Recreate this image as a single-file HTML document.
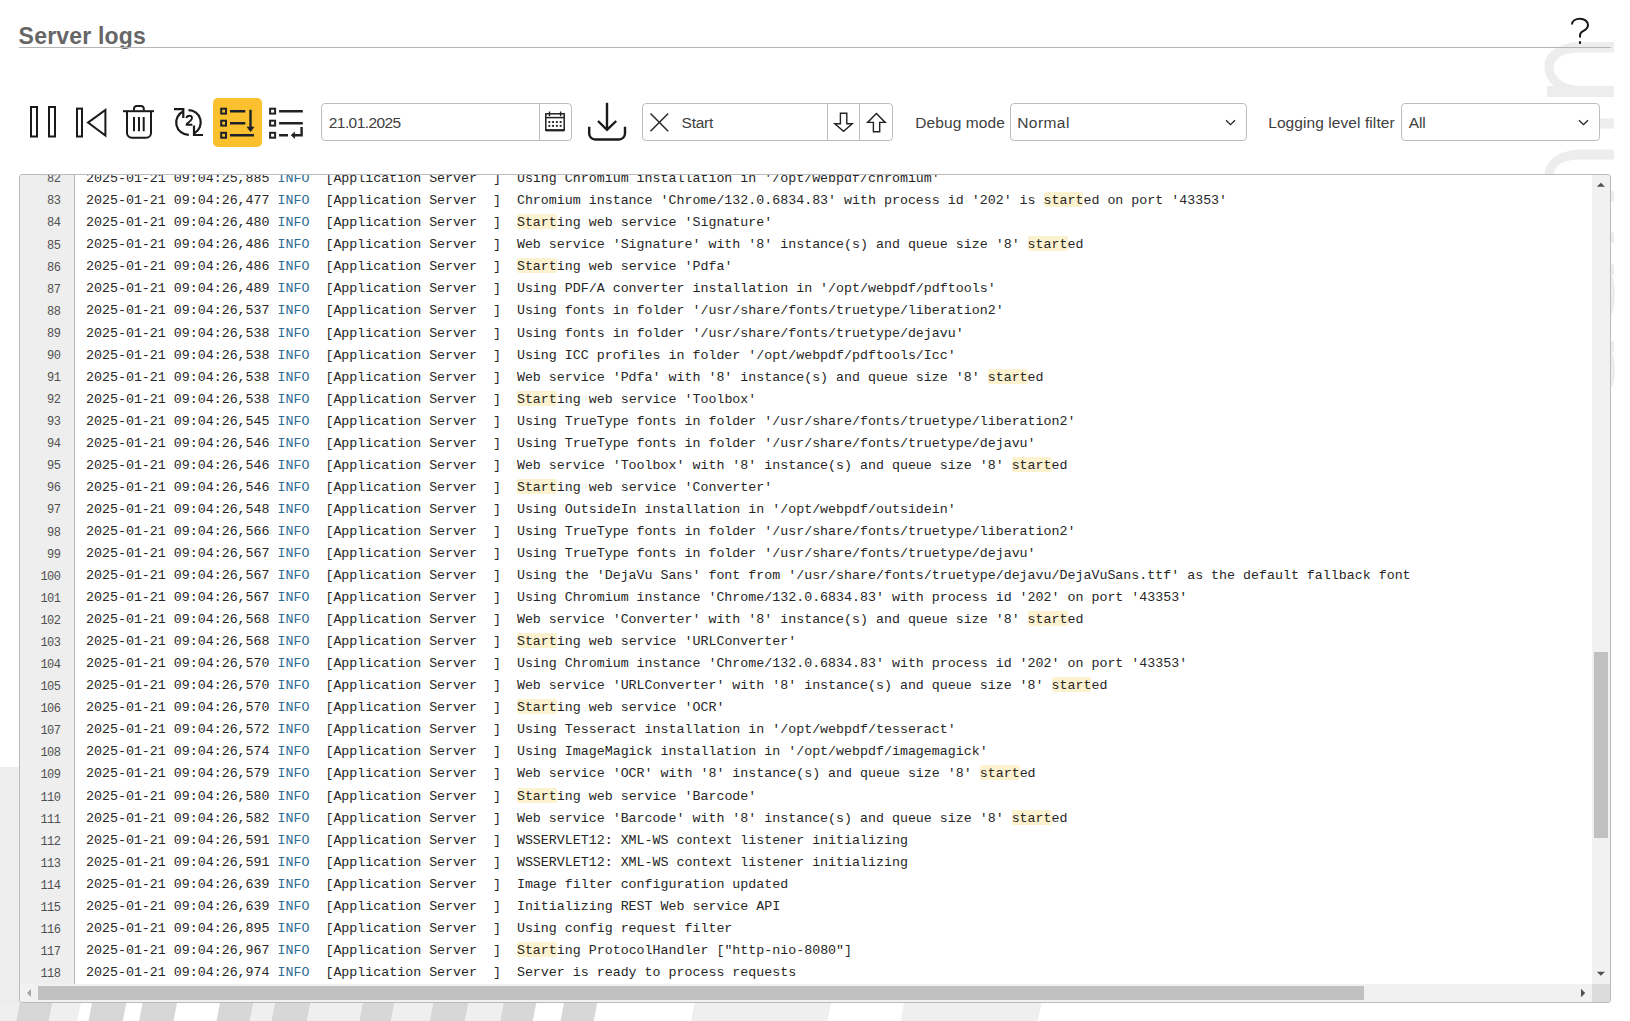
<!DOCTYPE html>
<html><head><meta charset="utf-8"><title>Server logs</title>
<style>
html,body{margin:0;padding:0;}
body{width:1630px;height:1021px;position:relative;overflow:hidden;background:#fff;font-family:"Liberation Sans",sans-serif;color:#333;}
.abs{position:absolute;}
#wm{position:absolute;left:0;top:0;width:1630px;height:1021px;}
#title{position:absolute;left:18.6px;top:21px;font-weight:bold;font-size:23px;line-height:30px;color:#666;white-space:nowrap;letter-spacing:0.2px;}
#uline{position:absolute;left:19px;top:47px;width:1592px;height:1px;background:#b5b5b5;}
#icons{position:absolute;left:0;top:0;width:1630px;height:200px;}
.box{position:absolute;box-sizing:border-box;border:1px solid #bdbdbd;border-radius:4px;background:#fff;height:38px;top:103px;}
.txt{position:absolute;font-size:15.5px;line-height:20px;white-space:nowrap;color:#404040;}
.lbl{position:absolute;font-size:15.5px;line-height:20px;white-space:nowrap;color:#404040;}
.sep{position:absolute;top:0;width:1px;height:36px;background:#bdbdbd;}
#panel{position:absolute;left:19px;top:174px;width:1592px;height:829px;box-sizing:border-box;border:1px solid #bbb;border-radius:3px;background:#fff;overflow:hidden;}
#gutter{position:absolute;left:0;top:0;width:54px;height:809px;background:#eeeeee;border-right:1px solid #bbb;}
#gnums{position:absolute;left:0;top:-6.7px;width:40.3px;}
.gn{font-family:"Liberation Mono",monospace;font-size:12px;letter-spacing:-0.6px;line-height:22.09px;height:22.09px;text-align:right;color:#505050;white-space:pre;}
#lines{position:absolute;z-index:0;left:66px;top:-6.8px;}
.ln{font-family:"Liberation Mono",monospace;font-size:13.3px;line-height:22.06px;height:22.06px;color:#262626;white-space:pre;}
.i{color:#2d6b93;}
b.h{font-weight:normal;position:relative;}
b.h::before{content:"";position:absolute;left:0;right:0;top:-1px;bottom:1px;background:#fdf2cf;border-radius:2px;z-index:-1;}
#vsb{position:absolute;left:1572px;top:0;width:18px;height:809px;background:#f1f1f1;}
#vthumb{position:absolute;left:2px;width:14px;top:477px;height:186px;background:#c1c1c1;}
#hsb{position:absolute;left:0;top:809px;width:1572px;height:18px;background:#f1f1f1;}
#hthumb{position:absolute;left:18px;top:2px;height:14px;width:1326px;background:#c1c1c1;}
#corner{position:absolute;left:1572px;top:809px;width:18px;height:18px;background:#dcdcdc;}
</style></head>
<body>
<svg id="wm" width="1630" height="1021" viewBox="0 0 1630 1021">
  <g fill="#ededed">
    <rect x="0" y="767" width="22" height="254"/>
    <path d="M1614,42 H1582 C1560,42 1544.5,52 1544.5,66 C1544.5,75 1548,81 1554,86 H1547 V97 H1614 V86 H1582 C1565,86 1553.7,78 1553.7,68 C1553.7,58 1563,52.5 1582,52.5 H1614 Z"/>
    <rect x="1590" y="118.4" width="24" height="10.2"/>
    <path d="M1614,149.4 H1582 C1560,149.4 1545,160 1545,174 V180 H1554.5 V174 C1554.5,165 1563,159.6 1582,159.6 H1614 Z"/>
    <rect x="1605" y="191" width="9" height="10.6"/>
    <rect x="1605" y="232.5" width="9" height="10.7"/>
    <rect x="1605" y="264.5" width="9" height="10.5"/>
    <path d="M1605,275 H1612 C1615.5,283 1616.5,300 1612,314.8 H1605 Z"/>
    <rect x="1605" y="341" width="9" height="11"/>
    <path d="M1605,352 H1612 C1615.5,360 1616.5,375 1612,387.6 H1605 Z"/>
  </g>
  <polygon points="0,1003 19.8,1003 16.3,1021 0,1021" fill="#efefef"/>
  <polygon points="19.8,1003 52.4,1003 48.9,1021 16.3,1021" fill="#d7d7d7"/>
  <polygon points="52.4,1003 80.8,1003 77.3,1021 48.9,1021" fill="#efefef"/>
  <polygon points="92,1003 126.3,1003 122.8,1021 88.5,1021" fill="#d7d7d7"/>
  <polygon points="142.6,1003 177,1003 173.5,1021 139.1,1021" fill="#d7d7d7"/>
  <polygon points="220,1003 253.4,1003 249.9,1021 216.5,1021" fill="#d7d7d7"/>
  <polygon points="253.4,1003 275,1003 271.5,1021 249.9,1021" fill="#efefef"/>
  <polygon points="275,1003 310.4,1003 306.9,1021 271.5,1021" fill="#d7d7d7"/>
  <polygon points="310.4,1003 362.8,1003 359.3,1021 306.9,1021" fill="#efefef"/>
  <polygon points="362.8,1003 394.6,1003 391.1,1021 359.3,1021" fill="#d7d7d7"/>
  <polygon points="394.6,1003 433.2,1003 429.7,1021 391.1,1021" fill="#efefef"/>
  <polygon points="433.2,1003 468.5,1003 465.0,1021 429.7,1021" fill="#d7d7d7"/>
  <polygon points="468.5,1003 503.7,1003 500.2,1021 465.0,1021" fill="#efefef"/>
  <polygon points="503.7,1003 536.3,1003 532.8,1021 500.2,1021" fill="#d7d7d7"/>
  <polygon points="564,1003 597.2,1003 593.7,1021 560.5,1021" fill="#d7d7d7"/>
  <polygon points="694.6,1003 831,1003 827.5,1021 691.1,1021" fill="#efefef"/>
  <polygon points="904,1003 1041.4,1003 1037.9,1021 900.5,1021" fill="#efefef"/>
</svg>

<div id="title">Server logs</div>
<div id="uline"></div>



<!-- date input -->
<div class="box" style="left:321px;width:251px;">
  <div class="sep" style="left:217px;"></div>
</div>
<div class="txt" style="left:328.8px;top:113px;letter-spacing:-0.578px;">21.01.2025</div>
<!-- search -->
<div class="box" style="left:642px;width:251px;">
  <div class="sep" style="left:184px;"></div>
  <div class="sep" style="left:216px;"></div>
</div>
<div class="txt" style="left:681.6px;top:113px;letter-spacing:-0.275px;">Start</div>
<!-- debug -->
<div class="lbl" style="left:915.2px;top:113px;letter-spacing:0.111px;">Debug mode</div>
<div class="box" style="left:1010px;width:237px;"></div>
<div class="txt" style="left:1017.2px;top:113px;letter-spacing:0.44px;">Normal</div>
<!-- logging -->
<div class="lbl" style="left:1268.2px;top:113px;letter-spacing:0.079px;">Logging level filter</div>
<div class="box" style="left:1401px;width:199px;"></div>
<div class="txt" style="left:1408.8px;top:113px;letter-spacing:-0.2px;">All</div>

<svg id="icons" width="1630" height="200" viewBox="0 0 1630 200" fill="none" stroke="#1a1a1a">
  <!-- help -->
  <path d="M1572,24.5 C1572,20.8 1575.5,18.8 1580,18.8 C1584.8,18.8 1588,21.6 1588,25 C1588,28.6 1585.2,30 1583,31.2 C1581,32.3 1580,33.4 1580,35.5 V37.6" stroke-width="2"/>
  <rect x="1579" y="41.2" width="2" height="2.7" fill="#1a1a1a" stroke="none"/>
  <!-- pause -->
  <rect x="31" y="107" width="6" height="29.5" stroke-width="2"/>
  <rect x="49" y="107" width="6" height="29.5" stroke-width="2"/>
  <!-- skip back -->
  <rect x="77" y="108.6" width="5" height="27.9" stroke-width="2"/>
  <path d="M88,122.6 L105.4,109.9 V135.5 Z" stroke-width="2"/>
  <!-- trash -->
  <path d="M123,111.2 H154" stroke-width="2"/>
  <path d="M134,110.5 V108.6 a2.6,2.6 0 0 1 2.6,-2.6 H141.2 a2.6,2.6 0 0 1 2.6,2.6 V110.5" stroke-width="2"/>
  <path d="M127,111 V133 a4.8,4.8 0 0 0 4.8,4.8 H146.2 a4.8,4.8 0 0 0 4.8,-4.8 V111" stroke-width="2"/>
  <path d="M134,117 V131.2 M139,117 V131.2 M143.7,117 V131.2" stroke-width="2"/>
  <!-- refresh -->
  <path d="M174,109.2 H183.3 V118" stroke-width="2.2"/>
  <path d="M183.4,111.3 A12.3,12.3 0 0 0 188.8,134.8" stroke-width="2.2"/>
  <path d="M188.5,110.2 A12.2,12.2 0 0 1 194.6,133" stroke-width="2.2"/>
  <path d="M194,125.5 V135 H203" stroke-width="2.2"/>
  <path d="M186.4,118.2 C186.7,116.5 187.9,115.7 189.3,115.7 C190.9,115.7 192,116.6 192,118.1 C192,119.6 190.9,120.6 189.6,121.6 C188.2,122.6 186.6,123.5 186.6,124.8 H192.4" stroke-width="1.9" stroke-linejoin="miter"/>
  <!-- list follow (active) -->
  <rect x="213" y="98" width="49" height="49" rx="5" fill="#fbc02d" stroke="none"/>
  <g stroke="#1d212c">
    <rect x="221.2" y="108.7" width="4.8" height="4.9" stroke-width="2"/>
    <rect x="221.2" y="120.7" width="4.8" height="4.9" stroke-width="2"/>
    <rect x="221.2" y="132.8" width="4.8" height="4.9" stroke-width="2"/>
    <path d="M230,111.2 H245.3 M230,123.2 H245.3 M230,135.2 H254" stroke-width="2.6"/>
    <path d="M250.5,109.8 V128" stroke-width="2.4"/>
    <path d="M247,127 H254 L250.5,131.7 Z" fill="#1d212c" stroke-width="0.6"/>
  </g>
  <!-- list wrap -->
  <g stroke="#222">
    <rect x="270.1" y="108.7" width="5" height="4.9" stroke-width="2"/>
    <rect x="270.1" y="120.7" width="5" height="4.9" stroke-width="2"/>
    <rect x="270.1" y="132.8" width="5" height="4.9" stroke-width="2"/>
    <path d="M279.1,111.2 H302.8 M279.1,123.2 H302.8 M279.1,135.2 H288" stroke-width="2.6"/>
    <path d="M301.6,127 V135.2 H294" stroke-width="2.4"/>
    <path d="M294.6,132.2 L291.2,135.2 L294.6,138.2 Z" fill="#222" stroke-width="0.8"/>
  </g>
  <!-- calendar -->
  <g stroke="#222">
    <rect x="545.8" y="113.8" width="18.4" height="16.4" stroke-width="1.5"/>
    <path d="M545.8,130.3 H564.2" stroke-width="2.2"/>
    <path d="M545.8,117.6 H564.2" stroke-width="1.5"/>
    <path d="M549.5,111.5 V116.2 M560.6,111.5 V116.2" stroke-width="1.4"/>
    <g fill="#222" stroke="none">
      <rect x="548.4" y="121.1" width="1.9" height="1.9"/><rect x="552.1" y="121.1" width="1.9" height="1.9"/><rect x="555.9" y="121.1" width="1.9" height="1.9"/><rect x="559.7" y="121.1" width="1.9" height="1.9"/>
      <rect x="548.4" y="124.9" width="1.9" height="1.9"/><rect x="552.1" y="124.9" width="1.9" height="1.9"/><rect x="555.9" y="124.9" width="1.9" height="1.9"/><rect x="559.7" y="124.9" width="1.9" height="1.9"/>
    </g>
  </g>
  <!-- download -->
  <g stroke="#1a1a1a" stroke-width="2.4">
    <path d="M607,102.8 V129.5"/>
    <path d="M598,121 L607,129.8 L616.2,121"/>
    <path d="M589.2,126.7 V133.5 a6,6 0 0 0 6,6 H619 a6,6 0 0 0 6,-6 V126.7"/>
  </g>
  <!-- clear X -->
  <path d="M650.5,113.5 L668.2,131.2 M668.2,113.5 L650.5,131.2" stroke="#2a2a2a" stroke-width="1.5"/>
  <!-- down / up arrows -->
  <path d="M840.4,113.2 H846.8 V123.8 H852.2 L843.6,131.3 L834.8,123.8 H840.4 Z" stroke="#222" stroke-width="1.4"/>
  <path d="M876.4,113.5 L885.2,122.4 H879.7 V131.8 H873.4 V122.4 H867.6 Z" stroke="#222" stroke-width="1.4"/>
  <!-- chevrons -->
  <path d="M1226,120.2 L1230.5,124.6 L1235,120.2" stroke="#222" stroke-width="1.25"/>
  <path d="M1579,120.2 L1583.5,124.7 L1588,120.2" stroke="#222" stroke-width="1.25"/>
</svg>

<div id="panel">
  <div id="gutter"><div id="gnums">
<div class="gn">82</div>
<div class="gn">83</div>
<div class="gn">84</div>
<div class="gn">85</div>
<div class="gn">86</div>
<div class="gn">87</div>
<div class="gn">88</div>
<div class="gn">89</div>
<div class="gn">90</div>
<div class="gn">91</div>
<div class="gn">92</div>
<div class="gn">93</div>
<div class="gn">94</div>
<div class="gn">95</div>
<div class="gn">96</div>
<div class="gn">97</div>
<div class="gn">98</div>
<div class="gn">99</div>
<div class="gn">100</div>
<div class="gn">101</div>
<div class="gn">102</div>
<div class="gn">103</div>
<div class="gn">104</div>
<div class="gn">105</div>
<div class="gn">106</div>
<div class="gn">107</div>
<div class="gn">108</div>
<div class="gn">109</div>
<div class="gn">110</div>
<div class="gn">111</div>
<div class="gn">112</div>
<div class="gn">113</div>
<div class="gn">114</div>
<div class="gn">115</div>
<div class="gn">116</div>
<div class="gn">117</div>
<div class="gn">118</div>
  </div></div>
  <div id="lines">
<div class="ln">2025-01-21 09:04:25,885 <span class="i">INFO</span>  [Application Server  ]  Using Chromium installation in '/opt/webpdf/chromium'</div>
<div class="ln">2025-01-21 09:04:26,477 <span class="i">INFO</span>  [Application Server  ]  Chromium instance 'Chrome/132.0.6834.83' with process id '202' is <b class="h">start</b>ed on port '43353'</div>
<div class="ln">2025-01-21 09:04:26,480 <span class="i">INFO</span>  [Application Server  ]  <b class="h">Start</b>ing web service 'Signature'</div>
<div class="ln">2025-01-21 09:04:26,486 <span class="i">INFO</span>  [Application Server  ]  Web service 'Signature' with '8' instance(s) and queue size '8' <b class="h">start</b>ed</div>
<div class="ln">2025-01-21 09:04:26,486 <span class="i">INFO</span>  [Application Server  ]  <b class="h">Start</b>ing web service 'Pdfa'</div>
<div class="ln">2025-01-21 09:04:26,489 <span class="i">INFO</span>  [Application Server  ]  Using PDF/A converter installation in '/opt/webpdf/pdftools'</div>
<div class="ln">2025-01-21 09:04:26,537 <span class="i">INFO</span>  [Application Server  ]  Using fonts in folder '/usr/share/fonts/truetype/liberation2'</div>
<div class="ln">2025-01-21 09:04:26,538 <span class="i">INFO</span>  [Application Server  ]  Using fonts in folder '/usr/share/fonts/truetype/dejavu'</div>
<div class="ln">2025-01-21 09:04:26,538 <span class="i">INFO</span>  [Application Server  ]  Using ICC profiles in folder '/opt/webpdf/pdftools/Icc'</div>
<div class="ln">2025-01-21 09:04:26,538 <span class="i">INFO</span>  [Application Server  ]  Web service 'Pdfa' with '8' instance(s) and queue size '8' <b class="h">start</b>ed</div>
<div class="ln">2025-01-21 09:04:26,538 <span class="i">INFO</span>  [Application Server  ]  <b class="h">Start</b>ing web service 'Toolbox'</div>
<div class="ln">2025-01-21 09:04:26,545 <span class="i">INFO</span>  [Application Server  ]  Using TrueType fonts in folder '/usr/share/fonts/truetype/liberation2'</div>
<div class="ln">2025-01-21 09:04:26,546 <span class="i">INFO</span>  [Application Server  ]  Using TrueType fonts in folder '/usr/share/fonts/truetype/dejavu'</div>
<div class="ln">2025-01-21 09:04:26,546 <span class="i">INFO</span>  [Application Server  ]  Web service 'Toolbox' with '8' instance(s) and queue size '8' <b class="h">start</b>ed</div>
<div class="ln">2025-01-21 09:04:26,546 <span class="i">INFO</span>  [Application Server  ]  <b class="h">Start</b>ing web service 'Converter'</div>
<div class="ln">2025-01-21 09:04:26,548 <span class="i">INFO</span>  [Application Server  ]  Using OutsideIn installation in '/opt/webpdf/outsidein'</div>
<div class="ln">2025-01-21 09:04:26,566 <span class="i">INFO</span>  [Application Server  ]  Using TrueType fonts in folder '/usr/share/fonts/truetype/liberation2'</div>
<div class="ln">2025-01-21 09:04:26,567 <span class="i">INFO</span>  [Application Server  ]  Using TrueType fonts in folder '/usr/share/fonts/truetype/dejavu'</div>
<div class="ln">2025-01-21 09:04:26,567 <span class="i">INFO</span>  [Application Server  ]  Using the 'DejaVu Sans' font from '/usr/share/fonts/truetype/dejavu/DejaVuSans.ttf' as the default fallback font</div>
<div class="ln">2025-01-21 09:04:26,567 <span class="i">INFO</span>  [Application Server  ]  Using Chromium instance 'Chrome/132.0.6834.83' with process id '202' on port '43353'</div>
<div class="ln">2025-01-21 09:04:26,568 <span class="i">INFO</span>  [Application Server  ]  Web service 'Converter' with '8' instance(s) and queue size '8' <b class="h">start</b>ed</div>
<div class="ln">2025-01-21 09:04:26,568 <span class="i">INFO</span>  [Application Server  ]  <b class="h">Start</b>ing web service 'URLConverter'</div>
<div class="ln">2025-01-21 09:04:26,570 <span class="i">INFO</span>  [Application Server  ]  Using Chromium instance 'Chrome/132.0.6834.83' with process id '202' on port '43353'</div>
<div class="ln">2025-01-21 09:04:26,570 <span class="i">INFO</span>  [Application Server  ]  Web service 'URLConverter' with '8' instance(s) and queue size '8' <b class="h">start</b>ed</div>
<div class="ln">2025-01-21 09:04:26,570 <span class="i">INFO</span>  [Application Server  ]  <b class="h">Start</b>ing web service 'OCR'</div>
<div class="ln">2025-01-21 09:04:26,572 <span class="i">INFO</span>  [Application Server  ]  Using Tesseract installation in '/opt/webpdf/tesseract'</div>
<div class="ln">2025-01-21 09:04:26,574 <span class="i">INFO</span>  [Application Server  ]  Using ImageMagick installation in '/opt/webpdf/imagemagick'</div>
<div class="ln">2025-01-21 09:04:26,579 <span class="i">INFO</span>  [Application Server  ]  Web service 'OCR' with '8' instance(s) and queue size '8' <b class="h">start</b>ed</div>
<div class="ln">2025-01-21 09:04:26,580 <span class="i">INFO</span>  [Application Server  ]  <b class="h">Start</b>ing web service 'Barcode'</div>
<div class="ln">2025-01-21 09:04:26,582 <span class="i">INFO</span>  [Application Server  ]  Web service 'Barcode' with '8' instance(s) and queue size '8' <b class="h">start</b>ed</div>
<div class="ln">2025-01-21 09:04:26,591 <span class="i">INFO</span>  [Application Server  ]  WSSERVLET12: XML-WS context listener initializing</div>
<div class="ln">2025-01-21 09:04:26,591 <span class="i">INFO</span>  [Application Server  ]  WSSERVLET12: XML-WS context listener initializing</div>
<div class="ln">2025-01-21 09:04:26,639 <span class="i">INFO</span>  [Application Server  ]  Image filter configuration updated</div>
<div class="ln">2025-01-21 09:04:26,639 <span class="i">INFO</span>  [Application Server  ]  Initializing REST Web service API</div>
<div class="ln">2025-01-21 09:04:26,895 <span class="i">INFO</span>  [Application Server  ]  Using config request filter</div>
<div class="ln">2025-01-21 09:04:26,967 <span class="i">INFO</span>  [Application Server  ]  <b class="h">Start</b>ing ProtocolHandler ["http-nio-8080"]</div>
<div class="ln">2025-01-21 09:04:26,974 <span class="i">INFO</span>  [Application Server  ]  Server is ready to process requests</div>
  </div>
  <div id="vsb">
    <svg class="abs" style="left:0;top:0" width="18" height="18"><path d="M4.8,11.7 L13,11.7 L8.9,7.8 Z" fill="#505050"/></svg>
    <div id="vthumb"></div>
    <svg class="abs" style="left:0;top:791px" width="18" height="18"><path d="M4.8,5.8 L13,5.8 L8.9,9.8 Z" fill="#505050"/></svg>
  </div>
  <div id="hsb">
    <svg class="abs" style="left:0;top:0" width="18" height="18"><path d="M11,4.9 L11,13 L6.9,8.95 Z" fill="#a3a3a3"/></svg>
    <div id="hthumb"></div>
    <svg class="abs" style="left:1554px;top:0" width="18" height="18"><path d="M7,4.7 L7,13.3 L11.2,9 Z" fill="#505050"/></svg>
  </div>
  <div id="corner"></div>
</div>
</body></html>
